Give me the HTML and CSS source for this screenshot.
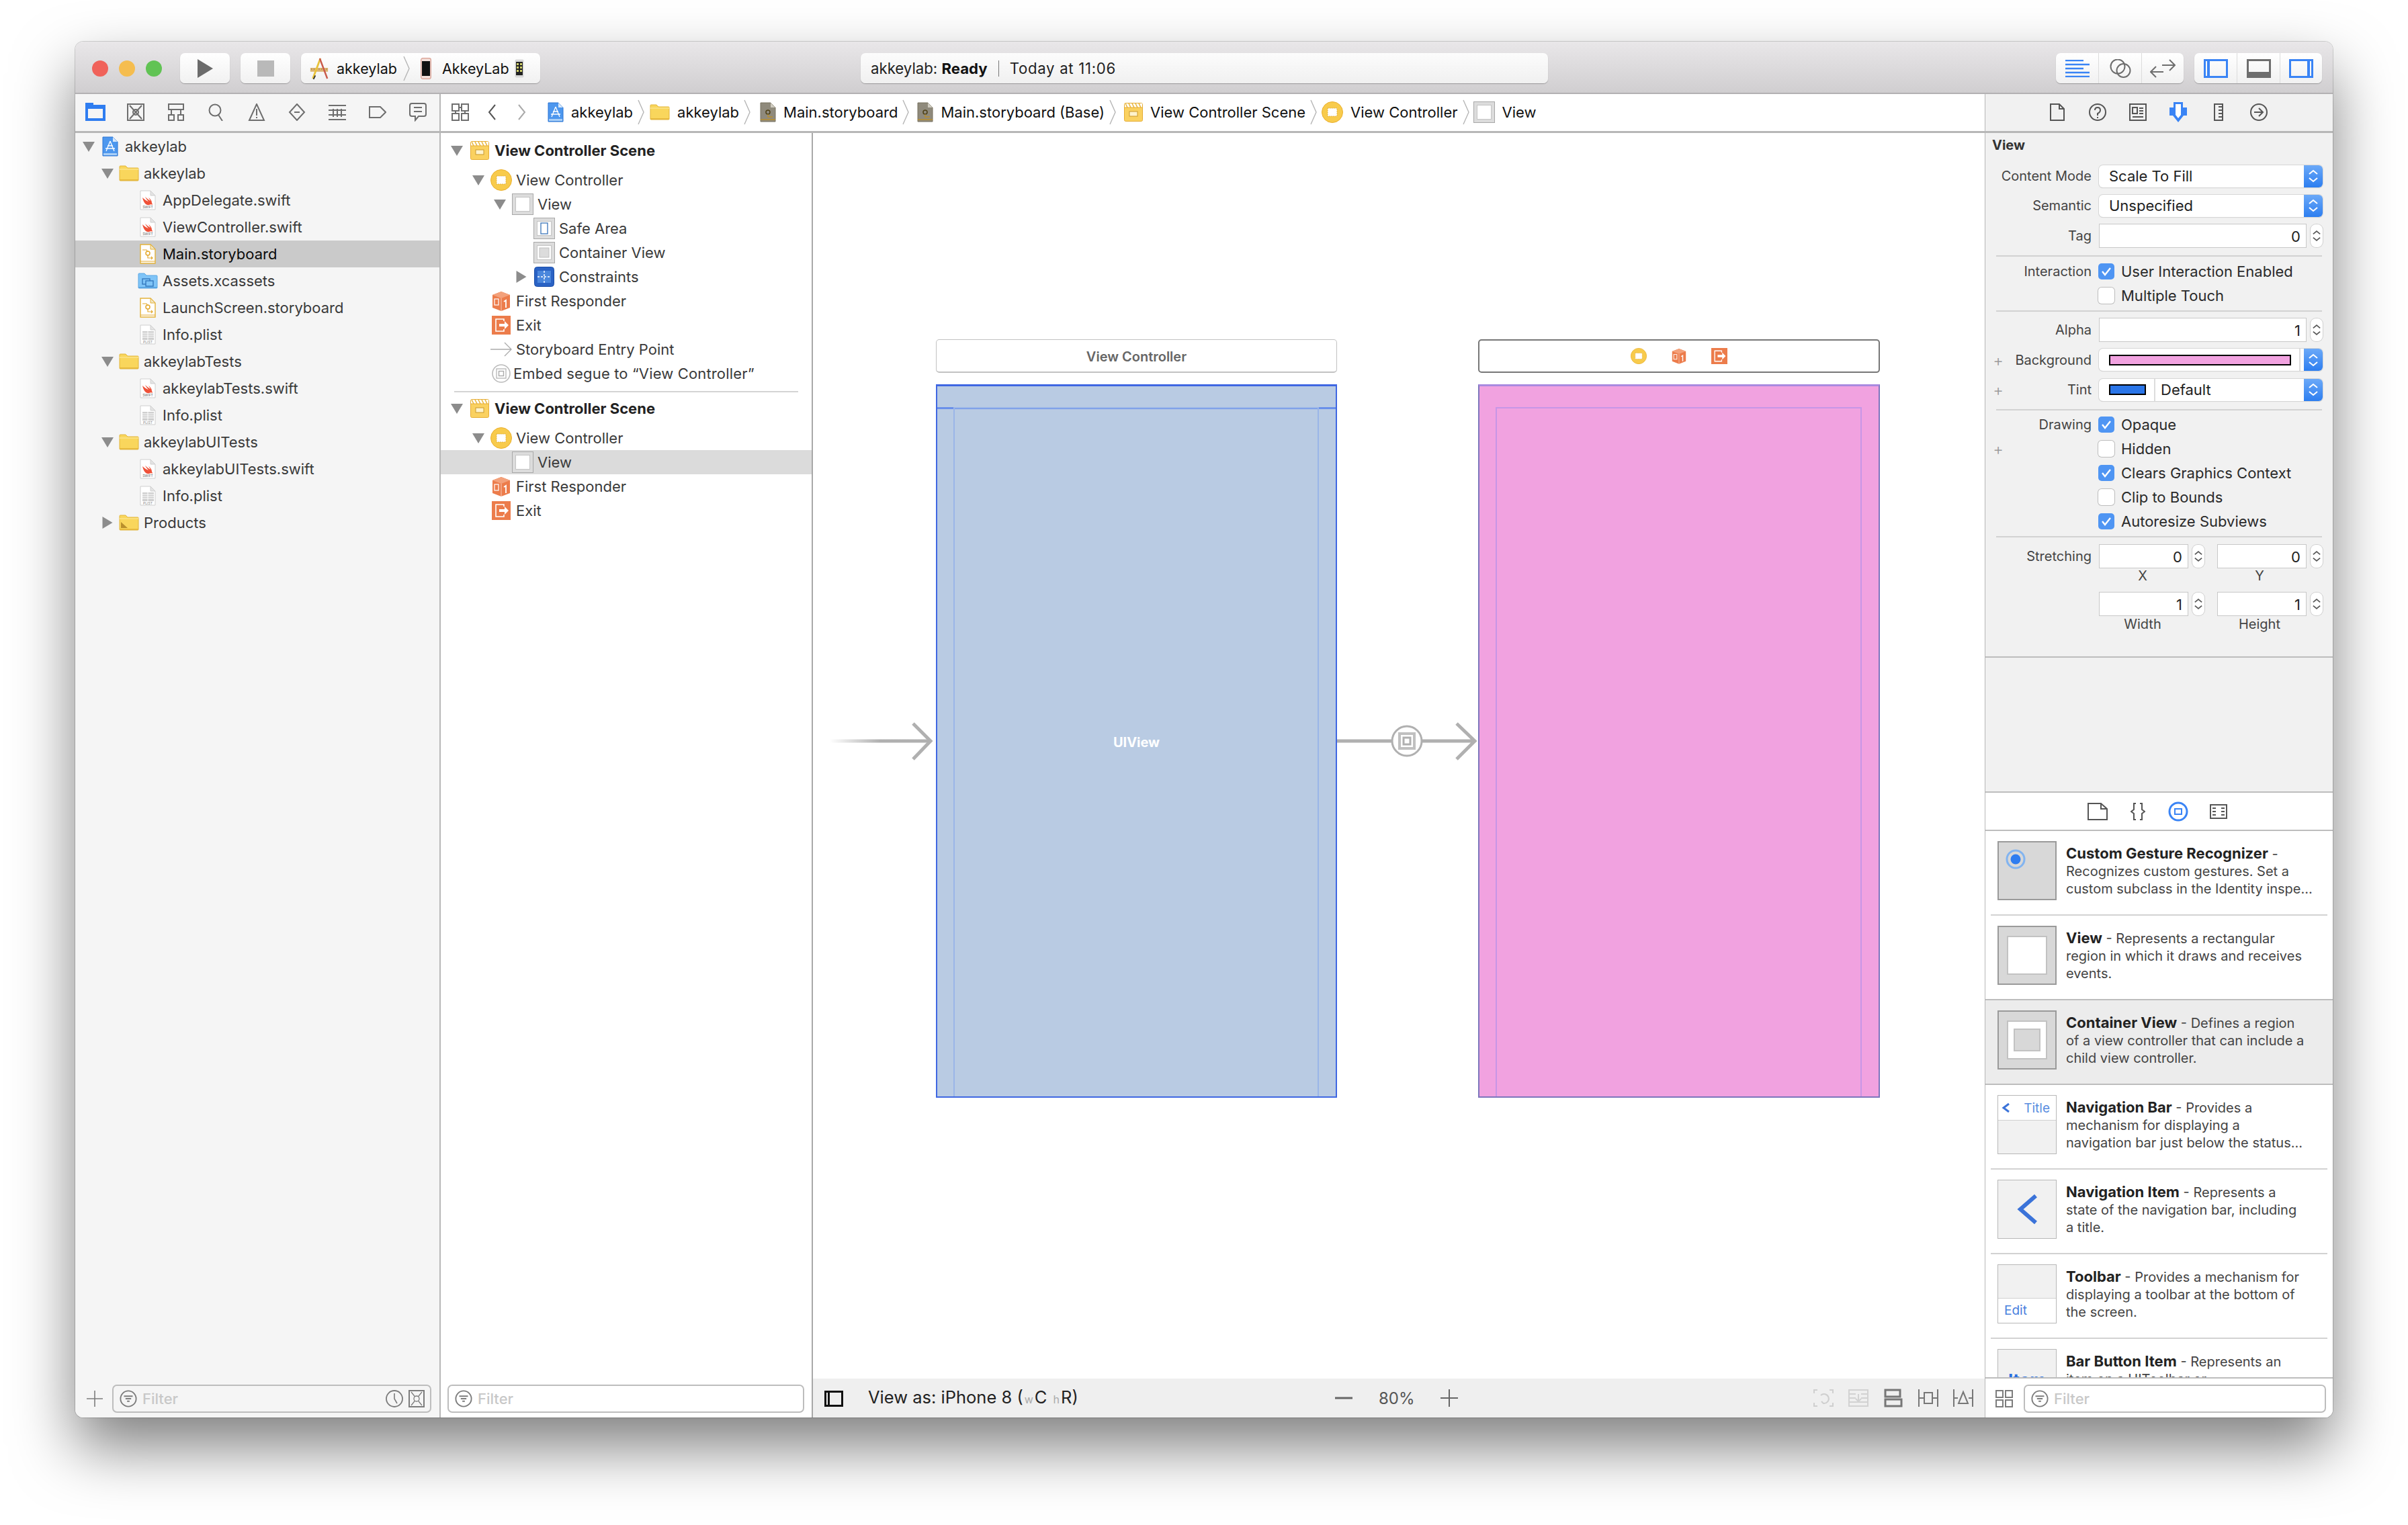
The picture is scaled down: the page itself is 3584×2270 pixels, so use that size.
FILE: index.html
```html
<!DOCTYPE html>
<html lang="en">
<head>
<meta charset="utf-8">
<title>Xcode - akkeylab</title>
<link rel="stylesheet" href="styles.css">
</head>
<body>
<svg class="defs" width="0" height="0" aria-hidden="true">
  <defs>
    <linearGradient id="fadeline" x1="0" x2="1" y1="0" y2="0"><stop offset="0" stop-color="#b0b0b0" stop-opacity="0"/><stop offset=".5" stop-color="#b0b0b0"/></linearGradient>
    <symbol id="tdown" viewBox="0 0 18 15"><path d="M0 0h18L9 15z" fill="#8c8c8c"/></symbol>
    <symbol id="tright" viewBox="0 0 15 18"><path d="M0 0l15 9L0 18z" fill="#8c8c8c"/></symbol>
    <symbol id="project" viewBox="0 0 24 30"><path d="M1 1h15l7 7v21H1z" fill="#4d97ee" stroke="#2d74d2"/><path d="M16 1v7h7z" fill="#d6e8fb"/><path d="M2 25h20v3H2z" fill="#a9cff7"/><path d="M12 7l-6 15M12 7l6 15M5 18h14M8 14h8" stroke="#fff" stroke-width="1.3" fill="none"/></symbol>
    <symbol id="folder" viewBox="0 0 30 24"><path d="M1 22V2q0-1 1-1h8l3 3h15q1 0 1 1v17q0 1-1 1H2q-1 0-1-1z" fill="#f9d65c" stroke="#e2b53a"/><path d="M1 5h28v2H1z" fill="#fbe07e"/><path d="M1 21h28v2H1z" fill="#e6b93e"/></symbol>
    <symbol id="products" viewBox="0 0 30 24"><use href="#folder"/><path d="M3 20V11l10 9z" fill="#b98f2c"/></symbol>
    <symbol id="assets" viewBox="0 0 30 24"><path d="M1 22V2q0-1 1-1h8l3 3h15q1 0 1 1v17q0 1-1 1H2q-1 0-1-1z" fill="#7fc4f7" stroke="#5aa6e3"/><path d="M1 21h28v2H1z" fill="#5aa6e3"/><rect x="7" y="9" width="11" height="8" fill="none" stroke="#2f73ba" stroke-width="1.3"/><rect x="12" y="12" width="11" height="8" fill="#7fc4f7" stroke="#2f73ba" stroke-width="1.3"/></symbol>
    <symbol id="swift" viewBox="0 0 24 30"><path d="M1 1h15l7 7v21H1z" fill="#fff" stroke="#cfcfcf"/><path d="M16 1v7h7z" fill="#e4e4e4" stroke="#cfcfcf"/><path d="M4 11c3 3 6 5 9 6-2-2-4-5-5-7 3 3 6 5 8 6-1-2-2-3-3-5 3 2 5 5 5 8 1 2 1 3 1 3-1-1-3-1-5 0-4 1-8-2-10-11z" fill="#ef5138"/><text x="12" y="27" font-size="5" text-anchor="middle" fill="#666" font-family="Inter, sans-serif">SWIFT</text></symbol>
    <symbol id="storyfile" viewBox="0 0 24 30"><path d="M1 1h15l7 7v21H1z" fill="#fff" stroke="#e3b23a" stroke-width="1.4"/><path d="M16 1v7h7z" fill="#f2e6c4" stroke="#e3b23a"/><circle cx="12" cy="14" r="3" fill="none" stroke="#e3a92e" stroke-width="1.5"/><path d="M4 9h6l2 3M12 17v4h7m-2-2l2 2-2 2M1 26h22" fill="none" stroke="#e3a92e" stroke-width="1.2"/></symbol>
    <symbol id="plist" viewBox="0 0 24 30"><path d="M1 1h15l7 7v21H1z" fill="#fff" stroke="#cfcfcf"/><path d="M16 1v7h7z" fill="#e4e4e4" stroke="#cfcfcf"/><path d="M4 10h17v13H4z" fill="#cfcfcf"/><path d="M4 13h17M4 16h17M4 19h17M12 10v13" stroke="#fff"/><text x="12" y="28" font-size="5" text-anchor="middle" fill="#888" font-family="Inter, sans-serif">PLIST</text></symbol>
    <symbol id="storygray" viewBox="0 0 24 30"><path d="M1 1h15l7 7v21H1z" fill="#8f8a7c" stroke="#77705f"/><path d="M16 1v7h7z" fill="#cfcbc0"/><circle cx="12" cy="15" r="3" fill="none" stroke="#4d3f14" stroke-width="1.5"/><path d="M12 18v4h7M1 26h22" fill="none" stroke="#b98f2c" stroke-width="1.3"/></symbol>
    <symbol id="scene" viewBox="0 0 28 28"><rect x=".5" y=".5" width="27" height="27" rx="2" fill="#fad160" stroke="#e6ad35"/><path d="M1 1h26v6H1z" fill="#fff"/><path d="M2 1l3 6M7 1l3 6M12 1l3 6M17 1l3 6M22 1l3 6" stroke="#e9b73f" stroke-width="1.6"/><path d="M1 7h26" stroke="#e6ad35"/><rect x="8" y="13" width="12" height="7" fill="#fff3cc" stroke="#c99a2c"/></symbol>
    <symbol id="vc" viewBox="0 0 32 32"><circle cx="16" cy="16" r="15.5" fill="#f8cb4c" stroke="#eab02f"/><rect x="9" y="10" width="14" height="12" fill="#fff"/><rect x="9" y="10" width="14" height="12" fill="none" stroke="#d9a431" stroke-dasharray="1.5 1.5"/></symbol>
    <symbol id="view" viewBox="0 0 32 32"><rect x=".5" y=".5" width="31" height="31" fill="#dcdcdc" stroke="#a8a8a8"/><rect x="5.500" y="5.500" width="21" height="21" fill="#fff" stroke="#c4c4c4"/></symbol>
    <symbol id="safe" viewBox="0 0 32 32"><use href="#view"/><rect x="11" y="8" width="10" height="16" fill="#fff" stroke="#3a74b8" stroke-width="1.3"/></symbol>
    <symbol id="container" viewBox="0 0 32 32"><use href="#view"/><rect x="9" y="9" width="14" height="14" fill="#dcdcdc" stroke="#c0c0c0"/></symbol>
    <symbol id="constraints" viewBox="0 0 30 30"><rect x=".5" y=".5" width="29" height="29" rx="4" fill="#2a62c4" stroke="#1c4fa8"/><rect x="5" y="6" width="20" height="18" fill="#4a86dc"/><path d="M15 6v18M5 15h20" stroke="#fff" stroke-width="1.4" stroke-dasharray="3 2"/></symbol>
    <symbol id="cube" viewBox="0 0 28 30"><path d="M14 1l13 5v19l-13 5L1 25V6z" fill="#ec7c4b"/><path d="M14 1l13 5-13 5L1 6z" fill="#f3a17b"/><path d="M14 11v19" stroke="#fff" stroke-opacity=".6"/><rect x="4" y="12" width="6" height="9" fill="none" stroke="#fff" stroke-width="1.2"/><path d="M18 16l3-2v11" fill="none" stroke="#fff" stroke-width="1.8"/></symbol>
    <symbol id="exit" viewBox="0 0 28 28"><rect width="28" height="28" fill="#ec7c4b"/><path d="M18 8V5H6v18h12v-3" fill="none" stroke="#fff" stroke-width="1.600"/><path d="M11 12h8V8l6 6-6 6v-4h-8z" fill="#fff"/></symbol>
    <symbol id="entry" viewBox="0 0 32 22"><path d="M0 11h31M21 1l10 10-10 10" fill="none" stroke="#aaa" stroke-width="1.3"/></symbol>
    <symbol id="embed" viewBox="0 0 28 28"><circle cx="14" cy="14" r="13" fill="#fff" stroke="#bbb" stroke-width="1.6"/><rect x="7" y="7" width="14" height="14" fill="none" stroke="#bbb" stroke-width="1.4"/><rect x="10.500" y="10.500" width="7" height="7" fill="none" stroke="#aaa" stroke-width="1.4"/></symbol>
    <symbol id="filter" viewBox="0 0 28 28"><circle cx="14" cy="14" r="12.500" fill="none" stroke="#7c7c7c" stroke-width="2"/><path d="M7 10h14M9.500 14h9M12 18h4" stroke="#7c7c7c" stroke-width="2"/></symbol>
    <symbol id="chev" viewBox="2 2 14 20"><path d="M3 9l6-5 6 5M3 15l6 5 6-5" fill="none" stroke="currentColor" stroke-width="2"/></symbol>
    <symbol id="sepchev" viewBox="0 0 10 38"><path d="M1 1l8 18L1 37" fill="none" stroke="#b5b5b5" stroke-width="1.4"/></symbol>
    <symbol id="check" viewBox="0 0 24 24"><path d="M6 12l4 5 8-10" fill="none" stroke="#fff" stroke-width="2.400"/></symbol>
    <symbol id="xcode" viewBox="0 0 32 34"><path d="M2 16h28v6H2z" fill="#dcb472"/><path d="M4 17v2M8 17v2M12 17v2M16 17v2M20 17v2M24 17v2M28 17v2" stroke="#9b7a42"/><path d="M18 1L6 33" stroke="#e8c23a" stroke-width="3"/><path d="M17 1l12 32" stroke="#c95a4a" stroke-width="2.500"/><path d="M10 28l-3 6" stroke="#333" stroke-width="2"/></symbol>
    <symbol id="iphone" viewBox="0 0 16 32"><rect x=".7" y=".7" width="14.600" height="30.600" rx="2.500" fill="#f3e0da" stroke="#d89c8f" stroke-width="1.2"/><rect x="2" y="5" width="12" height="22" fill="#111"/></symbol>
    <symbol id="iphonecolor" viewBox="0 0 14 28"><rect x=".5" y=".5" width="13" height="27" rx="2" fill="#d8d8d8"/><rect x="2" y="4" width="10" height="20" fill="#222"/><path d="M3 6h3v3H3zM8 6h3v3H8zM3 11h3v3H3zM8 11h3v3H8zM3 16h3v3H3zM8 16h3v3H8z" fill="#cfcf6a"/></symbol>
  </defs>
</svg>

<div class="window">
  <header class="titlebar">
    <div class="lights"><span class="light red"></span><span class="light yellow"></span><span class="light green"></span></div>
    <button class="tbtn first"><svg width="23" height="28" viewBox="0 0 23 28"><path d="M0 0l23 14L0 28z" fill="#6b6b6b"/></svg></button>
    <button class="tbtn"><span class="stopsq"></span></button>
    <div class="tbtn scheme">
      <svg class="scheme-app" width="30" height="34"><use href="#xcode"/></svg><span>akkeylab</span>
      <svg class="scheme-sep" width="10" height="38"><use href="#sepchev"/></svg>
      <svg class="scheme-phone" width="16" height="32"><use href="#iphone"/></svg><span>AkkeyLab</span>
      <svg class="scheme-phone2" width="14" height="28"><use href="#iphonecolor"/></svg>
    </div>
    <div class="status"><span>akkeylab: <b>Ready</b></span><i class="status-sep"></i><span class="status-time">Today at 11:06</span></div>
    <div class="segs">
      <div class="seg"><div class="segcell"><svg width="36" height="26" viewBox="0 0 36 26"><path d="M0 1h27M0 7h36M0 13h27M0 19h36M0 25h36" stroke="#3a84f5" stroke-width="2.400"/></svg></div>
        <div class="segcell"><svg width="32" height="28" viewBox="0 0 32 28"><circle cx="12" cy="11" r="10.500" fill="none" stroke="#6e6e6e" stroke-width="2"/><circle cx="20.500" cy="17" r="10" fill="none" stroke="#6e6e6e" stroke-width="2"/></svg></div>
        <div class="segcell last"><svg width="38" height="28" viewBox="0 0 38 28"><path d="M18 9h19M29 1l8 8-8 8M20 19H1M9 11l-8 8 8 8" fill="none" stroke="#6e6e6e" stroke-width="2"/></svg></div></div>
      <div class="seg"><div class="segcell"><svg width="36" height="28" viewBox="0 0 36 28"><rect x="1.500" y="1.500" width="33" height="25" fill="none" stroke="#3a84f5" stroke-width="3"/><rect x="5" y="3" width="4" height="22" fill="#3a84f5"/></svg></div>
        <div class="segcell"><svg width="36" height="28" viewBox="0 0 36 28"><rect x="1.500" y="1.500" width="33" height="25" fill="none" stroke="#6e6e6e" stroke-width="3"/><rect x="3" y="19" width="30" height="6" fill="#6e6e6e"/></svg></div>
        <div class="segcell last"><svg width="36" height="28" viewBox="0 0 36 28"><rect x="1.500" y="1.500" width="33" height="25" fill="none" stroke="#3a84f5" stroke-width="3"/><rect x="27" y="3" width="4" height="22" fill="#3a84f5"/></svg></div></div>
    </div>
  </header>

  <div class="workspace">
    <div class="navtools">
      <svg width="30" height="27" viewBox="0 0 30 27"><path fill="#2f7df0" fill-rule="evenodd" d="M0 0h12v3h18v24H0zM4 9v14h22V9z"/></svg>
      <svg width="26" height="26" viewBox="0 0 26 26" class="ticon"><rect x="1" y="1" width="24" height="24"/><path d="M4 3l18 20M22 3L4 23"/><circle cx="13" cy="13" r="4" fill="#fff"/></svg>
      <svg width="26" height="26" viewBox="0 0 26 26" class="ticon"><rect x="2" y="1" width="22" height="8"/><rect x="2" y="17" width="8" height="8"/><rect x="16" y="17" width="8" height="8"/><path d="M6 9v8M20 9v8"/></svg>
      <svg width="26" height="26" viewBox="0 0 26 26" class="ticon"><circle cx="11" cy="10" r="8.500"/><path d="M16 17l6 9"/></svg>
      <svg width="26" height="26" viewBox="0 0 26 26" class="ticon"><path d="M13 1L2 25h22zM13 8v10M13 20v2"/></svg>
      <svg width="26" height="26" viewBox="0 0 26 26" class="ticon"><path d="M13 1l11 12-11 12L2 13zM9 13h8"/></svg>
      <svg width="26" height="26" viewBox="0 0 26 26" class="ticon"><path d="M0 3h26M0 10h26M0 17h26M0 24h26M7 8v12M13 8v12M19 8v12"/></svg>
      <svg width="26" height="18" viewBox="0 0 26 18" class="ticon"><path d="M1 1h16l8 8-8 8H1z"/></svg>
      <svg width="26" height="28" viewBox="0 0 26 28" class="ticon"><path d="M4 1h18q3 0 3 3v13q0 3-3 3h-8l-5 6v-6H4q-3 0-3-3V4q0-3 3-3zM7 7h12M7 13h12"/></svg>
    </div>

    <div class="crumbs">
      <svg class="rel" width="26" height="26" viewBox="0 0 26 26"><g class="ticon"><rect x="1" y="1" width="10" height="10"/><rect x="15" y="1" width="10" height="10"/><rect x="1" y="15" width="10" height="10"/><rect x="15" y="15" width="10" height="10"/><path d="M11 6h4M6 11v4M20 11v4"/></g></svg>
      <svg class="back" width="12" height="24" viewBox="0 0 12 24"><path d="M11 1L2 12l9 11" fill="none" stroke="#555" stroke-width="2"/></svg>
      <svg class="fwd" width="12" height="24" viewBox="0 0 12 24"><path d="M1 1l9 11L1 23" fill="none" stroke="#aaa" stroke-width="2"/></svg>
      <span class="crumb c-first"><svg width="24" height="30"><use href="#project"/></svg>akkeylab</span>
      <svg class="csep s8" width="10" height="38"><use href="#sepchev"/></svg>
      <span class="crumb"><svg width="30" height="28"><use href="#folder"/></svg>akkeylab</span>
      <svg class="csep s14" width="10" height="38"><use href="#sepchev"/></svg>
      <span class="crumb"><svg width="24" height="30"><use href="#storygray"/></svg>Main.storyboard</span>
      <svg class="csep s12" width="10" height="38"><use href="#sepchev"/></svg>
      <span class="crumb"><svg width="24" height="30"><use href="#storygray"/></svg>Main.storyboard (Base)</span>
      <svg class="csep s12" width="10" height="38"><use href="#sepchev"/></svg>
      <span class="crumb"><svg width="28" height="28"><use href="#scene"/></svg>View Controller Scene</span>
      <svg class="csep s7" width="10" height="38"><use href="#sepchev"/></svg>
      <span class="crumb"><svg width="32" height="32"><use href="#vc"/></svg>View Controller</span>
      <svg class="csep s6" width="10" height="38"><use href="#sepchev"/></svg>
      <span class="crumb"><svg width="32" height="32"><use href="#view"/></svg>View</span>
    </div>

    <div class="insptools">
      <svg width="22" height="26" viewBox="0 0 22 26" class="ticon dark"><path d="M1 1h13l7 7v17H1zM14 1v7h7"/></svg>
      <svg width="26" height="26" viewBox="0 0 26 26" class="ticon dark"><circle cx="13" cy="13" r="12"/><path d="M9 10q0-4 4-4t4 4q0 3-4 5v3M13 20v2"/></svg>
      <svg width="26" height="26" viewBox="0 0 26 26" class="ticon dark"><rect x="1" y="1" width="24" height="24"/><rect x="5" y="6" width="7" height="9"/><path d="M15 7h6M15 11h6M15 15h6M5 20h16"/></svg>
      <svg width="30" height="30" viewBox="0 0 30 30"><path d="M8 0h14v8h6v12h-5l-8 10-8-10H2V8h6z" fill="#3a84f5"/><path d="M11 3h8v16l-4 5-4-5z" fill="#fff"/></svg>
      <svg width="14" height="26" viewBox="0 0 14 26" class="ticon dark"><rect x="1" y="1" width="12" height="24"/><path d="M7 5h6M7 10h6M7 15h6M7 20h6"/></svg>
      <svg width="26" height="26" viewBox="0 0 26 26" class="ticon dark"><circle cx="13" cy="13" r="12"/><path d="M6 13h13M13 7l6 6-6 6"/></svg>
    </div>

    <aside class="navigator">
      <div class="list">
        <div class="row d0"><svg class="tri" width="18" height="15"><use href="#tdown"/></svg><span class="ic"><svg width="24" height="30"><use href="#project"/></svg></span><span>akkeylab</span></div>
        <div class="row d1"><svg class="tri" width="18" height="15"><use href="#tdown"/></svg><span class="ic"><svg width="30" height="24"><use href="#folder"/></svg></span><span>akkeylab</span></div>
        <div class="row d2"><span class="tri"></span><span class="ic"><svg width="24" height="30"><use href="#swift"/></svg></span><span>AppDelegate.swift</span></div>
        <div class="row d2"><span class="tri"></span><span class="ic"><svg width="24" height="30"><use href="#swift"/></svg></span><span>ViewController.swift</span></div>
        <div class="row d2 picked"><span class="tri"></span><span class="ic"><svg width="24" height="30"><use href="#storyfile"/></svg></span><span>Main.storyboard</span></div>
        <div class="row d2"><span class="tri"></span><span class="ic"><svg width="30" height="24"><use href="#assets"/></svg></span><span>Assets.xcassets</span></div>
        <div class="row d2"><span class="tri"></span><span class="ic"><svg width="24" height="30"><use href="#storyfile"/></svg></span><span>LaunchScreen.storyboard</span></div>
        <div class="row d2"><span class="tri"></span><span class="ic"><svg width="24" height="30"><use href="#plist"/></svg></span><span>Info.plist</span></div>
        <div class="row d1"><svg class="tri" width="18" height="15"><use href="#tdown"/></svg><span class="ic"><svg width="30" height="24"><use href="#folder"/></svg></span><span>akkeylabTests</span></div>
        <div class="row d2"><span class="tri"></span><span class="ic"><svg width="24" height="30"><use href="#swift"/></svg></span><span>akkeylabTests.swift</span></div>
        <div class="row d2"><span class="tri"></span><span class="ic"><svg width="24" height="30"><use href="#plist"/></svg></span><span>Info.plist</span></div>
        <div class="row d1"><svg class="tri" width="18" height="15"><use href="#tdown"/></svg><span class="ic"><svg width="30" height="24"><use href="#folder"/></svg></span><span>akkeylabUITests</span></div>
        <div class="row d2"><span class="tri"></span><span class="ic"><svg width="24" height="30"><use href="#swift"/></svg></span><span>akkeylabUITests.swift</span></div>
        <div class="row d2"><span class="tri"></span><span class="ic"><svg width="24" height="30"><use href="#plist"/></svg></span><span>Info.plist</span></div>
        <div class="row d1"><svg class="tri" width="15" height="18"><use href="#tright"/></svg><span class="ic"><svg width="30" height="24"><use href="#products"/></svg></span><span>Products</span></div>
      </div>
      <div class="bottom">
        <svg class="plus" width="24" height="24" viewBox="0 0 24 24"><path d="M0 12h24M12 0v24" stroke="#7c7c7c" stroke-width="1.600"/></svg>
        <div class="field nav-field">
          <svg width="26" height="26"><use href="#filter"/></svg><span class="ph">Filter</span>
          <svg class="clock" width="26" height="26" viewBox="0 0 26 26"><circle cx="13" cy="13" r="12" fill="none" stroke="#7c7c7c" stroke-width="1.800"/><path d="M13 5v8l4 7" fill="none" stroke="#7c7c7c" stroke-width="1.600"/></svg>
          <svg width="24" height="26" viewBox="0 0 24 26"><rect x="1" y="1" width="22" height="24" fill="none" stroke="#7c7c7c" stroke-width="2"/><path d="M4 3l16 20M20 3L4 23" stroke="#7c7c7c" stroke-width="1.300"/><circle cx="12" cy="13" r="4" fill="#f5f5f5" stroke="#7c7c7c" stroke-width="1.300"/></svg>
        </div>
      </div>
    </aside>

    <section class="outline">
      <div class="list">
        <div class="orow o0 scene-row"><svg class="tri" width="18" height="15"><use href="#tdown"/></svg><span class="ic"><svg width="28" height="28"><use href="#scene"/></svg></span><b>View Controller Scene</b></div>
        <div class="orow o1"><svg class="tri" width="18" height="15"><use href="#tdown"/></svg><span class="ic"><svg width="32" height="32"><use href="#vc"/></svg></span><span>View Controller</span></div>
        <div class="orow o2"><svg class="tri" width="18" height="15"><use href="#tdown"/></svg><span class="ic"><svg width="32" height="32"><use href="#view"/></svg></span><span>View</span></div>
        <div class="orow o3"><span class="tri"></span><span class="ic"><svg width="32" height="32"><use href="#safe"/></svg></span><span>Safe Area</span></div>
        <div class="orow o3"><span class="tri"></span><span class="ic"><svg width="32" height="32"><use href="#container"/></svg></span><span>Container View</span></div>
        <div class="orow o3"><svg class="tri" width="15" height="18"><use href="#tright"/></svg><span class="ic"><svg width="30" height="30"><use href="#constraints"/></svg></span><span>Constraints</span></div>
        <div class="orow o1"><span class="tri"></span><span class="ic"><svg width="28" height="30"><use href="#cube"/></svg></span><span>First Responder</span></div>
        <div class="orow o1"><span class="tri"></span><span class="ic"><svg width="28" height="28"><use href="#exit"/></svg></span><span>Exit</span></div>
        <div class="orow o1"><span class="tri"></span><span class="ic"><svg width="32" height="22"><use href="#entry"/></svg></span><span>Storyboard Entry Point</span></div>
        <div class="orow o1"><span class="tri"></span><span class="ic"><svg width="28" height="28"><use href="#embed"/></svg></span><span class="tight">Embed segue to “View Controller”</span></div>
        <div class="osep"></div>
        <div class="orow o0 scene-row"><svg class="tri" width="18" height="15"><use href="#tdown"/></svg><span class="ic"><svg width="28" height="28"><use href="#scene"/></svg></span><b>View Controller Scene</b></div>
        <div class="orow o1"><svg class="tri" width="18" height="15"><use href="#tdown"/></svg><span class="ic"><svg width="32" height="32"><use href="#vc"/></svg></span><span>View Controller</span></div>
        <div class="orow o2 picked-light"><span class="tri"></span><span class="ic"><svg width="32" height="32"><use href="#view"/></svg></span><span>View</span></div>
        <div class="orow o1"><span class="tri"></span><span class="ic"><svg width="28" height="30"><use href="#cube"/></svg></span><span>First Responder</span></div>
        <div class="orow o1"><span class="tri"></span><span class="ic"><svg width="28" height="28"><use href="#exit"/></svg></span><span>Exit</span></div>
      </div>
      <div class="bottom white">
        <div class="field out-field"><svg width="26" height="26"><use href="#filter"/></svg><span class="ph">Filter</span></div>
      </div>
    </section>

    <main class="canvas">
      <div class="stage">
        <div class="vclabel a">View Controller</div>
        <div class="vclabel b">
          <svg width="24" height="26"><use href="#vc"/></svg>
          <svg width="22" height="26"><use href="#cube"/></svg>
          <svg width="24" height="26"><use href="#exit"/></svg>
        </div>
        <div class="vc-scene blue"><div class="band"></div><div class="safe"></div><span class="uiview">UIView</span></div>
        <div class="vc-scene pink"><div class="safe"></div></div>
        <svg class="links" width="1000" height="100" viewBox="0 855 1000 100">
          <rect x="25" y="902.500" width="150" height="5" fill="url(#fadeline)"/>
          <path d="M149 879l26 26-26 27M780 905h82M906 905h77M958 879l27 26-27 27" fill="none" stroke="#b0b0b0" stroke-width="5"/>
          <circle cx="884" cy="905" r="22" fill="#fff" stroke="#b0b0b0" stroke-width="3"/>
          <rect x="873" y="894" width="22" height="22" fill="none" stroke="#c0c0c0" stroke-width="4"/>
          <rect x="879" y="900" width="10" height="10" fill="none" stroke="#b0b0b0" stroke-width="3"/>
        </svg>
      </div>
      <div class="canvasbar">
        <svg class="outline-toggle" width="28" height="24" viewBox="0 0 28 24"><rect x="1.500" y="1.500" width="25" height="21" fill="none" stroke="#111" stroke-width="3"/><rect x="5" y="3" width="3" height="18" fill="#111"/></svg>
        <span class="viewas">View as: iPhone 8 (<small>w</small>C <small>h</small>R)</span>
        <div class="zoomctl">
          <svg width="26" height="4" viewBox="0 0 26 4"><path d="M0 2h26" stroke="#666" stroke-width="3"/></svg>
          <span>80%</span>
          <svg width="26" height="26" viewBox="0 0 26 26"><path d="M0 13h26M13 0v26" stroke="#666" stroke-width="2"/></svg>
        </div>
        <div class="cbicons">
          <svg width="30" height="26" viewBox="0 0 30 26"><path d="M1 6V1h5M24 1h5v5M1 20v5h5M24 25h5v-5M11 9a7 7 0 1 1 4 12l-3-3" fill="none" stroke="#cfcfcf" stroke-width="2"/></svg>
          <svg width="30" height="26" viewBox="0 0 30 26"><path d="M1 1h28v24H1zM1 7h10M19 7h10M1 13h10M19 13h10M1 19h28M15 7v11m-4-4l4 4 4-4" fill="none" stroke="#d2d2d2" stroke-width="2"/></svg>
          <svg width="30" height="28" viewBox="0 0 30 28"><path d="M3 2h22v10H3zM3 16h24v10H3z" fill="none" stroke="#777" stroke-width="3"/></svg>
          <svg width="30" height="26" viewBox="0 0 30 26"><path d="M1 0v26M29 0v26M1 13h7M22 13h7M9 5h12v16H9z" fill="none" stroke="#777" stroke-width="2"/></svg>
          <svg width="30" height="26" viewBox="0 0 30 26"><path d="M1 0v26M29 0v26M1 13h6M23 13h6M15 4l7 17H8z" fill="none" stroke="#777" stroke-width="2"/></svg>
        </div>
      </div>
    </main>

    <aside class="inspector">
      <div class="attrs">
        <div class="insp-title">View</div>
        <div class="irow r44"><label class="ilabel">Content Mode</label><div class="popup"><span>Scale To Fill</span><i class="popup-arrow"><svg width="14" height="20"><use href="#chev"/></svg></i></div></div>
        <div class="irow r44"><label class="ilabel">Semantic</label><div class="popup"><span>Unspecified</span><i class="popup-arrow"><svg width="14" height="20"><use href="#chev"/></svg></i></div></div>
        <div class="irow r45"><label class="ilabel">Tag</label><div class="numfield full">0</div><span class="stepper"><svg width="12" height="22"><use href="#chev"/></svg></span></div>
        <hr class="idiv d7">
        <div class="irow r36"><label class="ilabel">Interaction</label><span class="cb on"><svg width="24" height="24"><use href="#check"/></svg></span><span class="cbtext">User Interaction Enabled</span></div>
        <div class="irow r36"><label class="ilabel"></label><span class="cb"></span><span class="cbtext">Multiple Touch</span></div>
        <hr class="idiv d4">
        <div class="irow r44"><label class="ilabel">Alpha</label><div class="numfield full">1</div><span class="stepper"><svg width="12" height="22"><use href="#chev"/></svg></span></div>
        <div class="irow r45"><span class="iplus">+</span><label class="ilabel">Background</label><div class="popup swatchpop"><span class="swatch pinkswatch"></span><i class="popup-cut"></i><i class="popup-arrow"><svg width="14" height="20"><use href="#chev"/></svg></i></div></div>
        <div class="irow r44"><span class="iplus">+</span><label class="ilabel">Tint</label><div class="popup swatchpop"><span class="swatch tintswatch"></span><i class="popup-cut near"></i><span class="tint-name">Default</span><i class="popup-arrow"><svg width="14" height="20"><use href="#chev"/></svg></i></div></div>
        <hr class="idiv d7b">
        <div class="irow r36"><label class="ilabel">Drawing</label><span class="cb on"><svg width="24" height="24"><use href="#check"/></svg></span><span class="cbtext">Opaque</span></div>
        <div class="irow r36"><span class="iplus">+</span><label class="ilabel"></label><span class="cb"></span><span class="cbtext">Hidden</span></div>
        <div class="irow r36"><label class="ilabel"></label><span class="cb on"><svg width="24" height="24"><use href="#check"/></svg></span><span class="cbtext">Clears Graphics Context</span></div>
        <div class="irow r36"><label class="ilabel"></label><span class="cb"></span><span class="cbtext">Clip to Bounds</span></div>
        <div class="irow r36"><label class="ilabel"></label><span class="cb on"><svg width="24" height="24"><use href="#check"/></svg></span><span class="cbtext">Autoresize Subviews</span></div>
        <hr class="idiv d4c">
        <div class="irow r44"><label class="ilabel">Stretching</label><div class="numfield half">0</div><span class="stepper"><svg width="12" height="22"><use href="#chev"/></svg></span><div class="numfield half second">0</div><span class="stepper"><svg width="12" height="22"><use href="#chev"/></svg></span></div>
        <div class="subrow xy"><span>X</span><span>Y</span></div>
        <div class="irow r44 gap13"><label class="ilabel"></label><div class="numfield half">1</div><span class="stepper"><svg width="12" height="22"><use href="#chev"/></svg></span><div class="numfield half second">1</div><span class="stepper"><svg width="12" height="22"><use href="#chev"/></svg></span></div>
        <div class="subrow"><span>Width</span><span>Height</span></div>
      </div>
      <div class="lib-gap"></div>
      <div class="libtabs">
        <svg width="30" height="26" viewBox="0 0 30 26" class="ticon dark"><path d="M1 1h19l9 8v16H1zM20 1v8h9"/></svg>
        <svg width="22" height="26" viewBox="0 0 22 26" class="ticon dark"><path d="M8 1H5v9l-4 3 4 3v9h3M14 1h3v9l4 3-4 3v9h-3"/></svg>
        <svg width="30" height="30" viewBox="0 0 30 30"><circle cx="15" cy="15" r="13" fill="none" stroke="#3a84f5" stroke-width="3"/><rect x="10" y="11" width="10" height="8" fill="none" stroke="#3a84f5" stroke-width="2"/></svg>
        <svg width="26" height="22" viewBox="0 0 26 22" class="ticon dark"><rect x="1" y="1" width="24" height="20"/><path d="M4 6h5M4 11h5M4 16h5M17 6h5M17 11h5M17 16h5"/></svg>
      </div>
      <div class="library">
        <article class="item"><div class="thumb gray"><svg class="radio" width="30" height="30" viewBox="0 0 30 30"><circle cx="15" cy="15" r="13" fill="none" stroke="#82b4f0" stroke-width="3"/><circle cx="15" cy="15" r="7.500" fill="#2f7df0"/></svg></div><p><b>Custom Gesture Recognizer</b> -<br>Recognizes custom gestures. Set a<br>custom subclass in the Identity inspe...</p></article>
        <article class="item"><div class="thumb gray"><span class="thumb-view"></span></div><p><b>View</b> - Represents a rectangular<br>region in which it draws and receives<br>events.</p></article>
        <article class="item chosen"><div class="thumb gray"><span class="thumb-view"><span class="thumb-inner"></span></span></div><p><b>Container View</b> - Defines a region<br>of a view controller that can include a<br>child view controller.</p></article>
        <article class="item"><div class="thumb pale"><div class="nb"><svg width="12" height="16" viewBox="0 0 12 16"><path d="M11 2L3 8l8 6" fill="none" stroke="#3b73d9" stroke-width="3"/></svg><span>Title</span></div></div><p><b>Navigation Bar</b> - Provides a<br>mechanism for displaying a<br>navigation bar just below the status...</p></article>
        <article class="item"><div class="thumb pale center"><svg width="32" height="46" viewBox="0 0 32 46"><path d="M29 3L6 23l23 20" fill="none" stroke="#3b73d9" stroke-width="6"/></svg></div><p><b>Navigation Item</b> - Represents a<br>state of the navigation bar, including<br>a title.</p></article>
        <article class="item"><div class="thumb pale tb"><div class="tb-bar">Edit</div></div><p><b>Toolbar</b> - Provides a mechanism for<br>displaying a toolbar at the bottom of<br>the screen.</p></article>
        <article class="item"><div class="thumb pale barbtn"><span>Item</span></div><p><b>Bar Button Item</b> - Represents an<br>item on a UIToolbar or</p></article>
      </div>
      <div class="bottom white">
        <svg class="gridic" width="26" height="26" viewBox="0 0 26 26"><path d="M1 1h10v10H1zM15 1h10v10H15zM1 15h10v10H1zM15 15h10v10H15z" fill="none" stroke="#7c7c7c" stroke-width="2"/></svg>
        <div class="field lib-field"><svg width="26" height="26"><use href="#filter"/></svg><span class="ph">Filter</span></div>
      </div>
    </aside>
  </div>
</div>
</body>
</html>
```

FILE: styles.css
```css
* { box-sizing: border-box; }
html, body { margin: 0; padding: 0; }
body {
  width: 3584px; height: 2270px; overflow: hidden; background: #fff;
  font-family: Inter, "Liberation Sans", sans-serif; font-size: 22px; color: #3a3a3a;
  padding: 62px 112px 0;
}
.defs { position: absolute; }
svg { display: block; flex: none; }
.ticon, .ticon * { fill: none; stroke: #6e6e6e; stroke-width: 2; }
.ticon.dark, .ticon.dark * { stroke: #555; }

.window {
  width: 3360px; height: 2048px; border-radius: 12px; overflow: hidden;
  display: flex; flex-direction: column; background: #fff;
  box-shadow: 0 44px 90px rgba(0,0,0,.5), 0 0 0 1px rgba(0,0,0,.16);
}

/* title bar */
.titlebar {
  height: 78px; flex: none; display: flex; align-items: flex-start; padding-top: 17px;
  background: linear-gradient(#e9e7e9, #d0ced0); border-bottom: 2px solid #b3b1b3;
}
.lights { display: flex; gap: 16px; width: 156px; padding: 11px 0 0 25px; flex: none; }
.light { width: 24px; height: 24px; border-radius: 50%; }
.red { background: #f0625a; } .yellow { background: #f5bd4f; } .green { background: #61c354; }
.tbtn {
  width: 74px; height: 45px; margin-right: 16px; padding: 0; flex: none;
  border: 0; border-radius: 7px; background: linear-gradient(#fff, #f1f1f1);
  box-shadow: 0 1px 1px rgba(0,0,0,.28);
  display: flex; align-items: center; justify-content: center;
}
.stopsq { width: 25px; height: 24px; background: #b9b9b9; }
.scheme { width: 356px; justify-content: flex-start; color: #111; font-size: 21.500px; padding-left: 12px; margin-right: 0; }
.scheme-app { margin-right: 11px; }
.scheme-sep { margin: 0 6px 0 9px; }
.scheme-phone { margin: 0 16px 0 10px; }
.scheme-phone2 { margin-left: 8px; }
.status {
  width: 1023px; height: 45px; margin-left: 477px; border-radius: 7px; flex: none;
  background: linear-gradient(#fcfcfc, #f0f0f0); box-shadow: 0 1px 1px rgba(0,0,0,.28);
  display: flex; align-items: center; padding-left: 15px; color: #222; font-size: 22.200px;
}
.status b { font-weight: 700; color: #111; }
.status-sep { width: 1px; height: 24px; background: #777; margin: 0 16px; }
.status-time { letter-spacing: .7px; }
.segs { display: flex; gap: 16px; margin-left: 756px; }
.seg {
  display: flex; height: 45px; border-radius: 7px; background: linear-gradient(#fff, #f1f1f1);
  box-shadow: 0 1px 1px rgba(0,0,0,.28);
}
.segcell { width: 64px; display: flex; align-items: center; justify-content: center; border-right: 1px solid #dcdcdc; }
.segcell.last { border-right: 0; width: 62px; }

/* workspace */
.workspace {
  flex: 1; min-height: 0; display: grid;
  grid-template-columns: 544px 554px 1744px 518px;
  grid-template-rows: 58px 1912px;
}
.navtools {
  background: #f5f5f5; border-bottom: 3px solid #b7b7b7; border-right: 2px solid #b7b7b7;
  display: grid; grid-template-columns: repeat(9, 60px); justify-items: center; align-items: center; padding-bottom: 2px;
}
.crumbs {
  grid-column: 2 / span 2; background: #fff; border-bottom: 3px solid #b7b7b7;
  display: flex; align-items: center; padding-left: 16px; color: #111; font-size: 22px; padding-bottom: 1px;
}
.rel { margin-right: 28px; }
.fwd { margin-left: 33px; }
.c-first { margin-left: 32px; }
.crumb { display: flex; align-items: center; gap: 11px; white-space: nowrap; }
.csep { margin: 0 8px 0 7px; }
.csep.s6 { margin-right: 6px; }
.csep.s7 { margin-right: 7px; }
.csep.s8 { margin-right: 8px; }
.csep.s12 { margin-right: 12px; }
.csep.s14 { margin-right: 14px; }
.insptools {
  background: #f1f1f1; border-bottom: 3px solid #b7b7b7; border-left: 1px solid #b7b7b7;
  display: grid; grid-template-columns: repeat(6, 60px); justify-items: center; align-items: center; padding: 0 0 2px 77px;
}

/* lists */
.navigator, .outline { display: flex; flex-direction: column; min-height: 0; }
.navigator { background: #f5f5f5; border-right: 2px solid #b7b7b7; }
.outline { background: #fff; border-right: 2px solid #a8a8a8; }
.list { flex: 1; min-height: 0; }
.row { height: 40px; display: flex; align-items: center; white-space: nowrap; }
.picked { background: #cacaca; color: #0c0c0c; }
.d0 { padding-left: 8px; } .d1 { padding-left: 36px; } .d2 { padding-left: 64px; }
.tri { width: 24px; flex: none; padding: 0; }
svg.tri { width: 24px; }
.ic { width: 40px; flex: none; display: flex; justify-content: center; margin-right: 2px; }
.outline .list { padding-top: 8px; }
.orow { height: 36px; display: flex; align-items: center; white-space: nowrap; }
.orow .tri { margin-right: 2px; }
.o0 { padding-left: 12px; } .o1 { padding-left: 44px; } .o2 { padding-left: 76px; } .o3 { padding-left: 108px; }
.scene-row { margin-bottom: 8px; color: #222; }
.scene-row b { font-weight: 700; }
.tight { margin-left: -4px; letter-spacing: .15px; }
.osep { height: 2px; background: #d4d4d4; margin: 8px 20px 6px 20px; }
.picked-light { background: #dbdbdb; }

.bottom { height: 58px; flex: none; display: flex; align-items: center; position: relative; padding-top: 2px; }
.bottom.white { background: #fff; }
.plus { margin: 0 14px 0 17px; }
.field {
  height: 42px; border: 2px solid #bdbdbd; border-radius: 7px; display: flex; align-items: center; padding-left: 9px; gap: 8px;
}
.nav-field { width: 475px; }
.out-field { width: 531px; margin-left: 10px; }
.lib-field { width: 450px; margin-left: 16px; }
.ph { color: #c8c8c8; font-weight: 500; }
.clock { margin-left: auto; }
.nav-field svg:last-child { margin-right: 8px; }
.gridic { margin-left: 15px; }

/* canvas */
.canvas { display: flex; flex-direction: column; min-height: 0; background: #fff; }
.stage { flex: 1; position: relative; min-height: 0; background: #fff; }
.vclabel {
  position: absolute; top: 307px; width: 597px; height: 50px; border-radius: 5px; background: #fff;
  display: flex; align-items: center; justify-content: center;
  font-size: 20px; font-weight: 600; color: #666; padding-top: 2px;
}
.vclabel.a { left: 183px; border: 1px solid #c2c2c2; border-bottom-width: 2px; }
.vclabel.b { left: 990px; width: 598px; border: 2px solid #777; gap: 37px; padding-top: 0; }
.vc-scene { position: absolute; top: 374px; width: 597px; height: 1062px; }
.vc-scene.blue { left: 183px; background: #b9cbe3; border: 2px solid #3f67e2; border-top-width: 3px; }
.vc-scene.pink { left: 990px; width: 598px; background: #f1a2e0; border: 2px solid #7d76bc; border-top-width: 3px; border-top-color: #a98ae0; }
.band { position: absolute; left: 0; right: 0; top: 31px; height: 3px; background: #6a90ea; }
.safe { position: absolute; left: 24px; right: 25px; top: 31px; bottom: 0; border: 2px solid #9ab5e8; border-bottom: 0; }
.pink .safe { border-color: #c796e6; }
.uiview { position: absolute; left: 0; right: 0; top: 518px; text-align: center; color: #fff; font-weight: 700; font-size: 20px; line-height: 24px; }
.links { position: absolute; left: 0; top: 855px; }
.canvasbar {
  height: 58px; flex: none; background: #efefef; display: flex; align-items: center; padding-left: 17px;
}
.outline-toggle { margin-right: 37px; margin-top: 2px; }
.viewas { font-size: 25.500px; color: #222; white-space: nowrap; width: 695px; margin-top: -4px; }
.viewas small { font-size: 16px; color: #aaa; margin: 0 2px; }
.zoomctl { display: flex; align-items: center; gap: 0; width: 300px; }
.zoomctl svg:first-child { margin-right: 39px; }
.zoomctl span { font-size: 24px; color: #555; width: 92px; }
.cbicons { display: flex; gap: 22px; align-items: center; margin-left: 412px; }

/* inspector */
.inspector { background: #f1f1f1; border-left: 1px solid #b7b7b7; display: flex; flex-direction: column; min-height: 0; }
.attrs { height: 781px; flex: none; border-bottom: 2px solid #bdbdbd; position: relative; }
.insp-title { height: 36px; line-height: 36px; padding-left: 10px; margin-bottom: 6px; font-weight: 700; font-size: 20px; color: #333; }
.irow { display: flex; align-items: center; position: relative; }
.r44 { height: 44px; } .r45 { height: 45px; } .r36 { height: 36px; }
.gap13 { margin-top: 13px; }
.ilabel { width: 158px; flex: none; text-align: right; margin-right: 11px; font-size: 20px; color: #444; }
.popup {
  width: 333px; height: 33px; background: #fff; border-radius: 6px; display: flex; align-items: center; position: relative;
  box-shadow: 0 0 0 1px #d6d6d6, 0 1px 1px rgba(0,0,0,.18); padding-left: 15px; overflow: hidden; color: #222;
}
.popup-arrow {
  position: absolute; right: 0; top: 0; bottom: 0; width: 28px; color: #fff;
  background: linear-gradient(#6ba9f8, #2d7ef0); display: flex; align-items: center; justify-content: center;
}
.popup-cut { position: absolute; left: 298px; top: 0; bottom: 0; width: 2px; background: #dcdcdc; }
.popup-cut.near { left: 82px; }
.swatch { height: 16px; border: 2px solid #000; display: block; }
.pinkswatch { width: 271px; background: #f1a2e0; }
.tintswatch { width: 55px; background: #2a75e8; }
.tint-name { margin-left: 22px; }
.numfield {
  height: 36px; background: #fff; border: 1px solid #c8c8c8; text-align: right; line-height: 36px; padding-right: 8px; color: #222;
}
.numfield.full { width: 309px; }
.numfield.half { width: 133px; }
.numfield.second { margin-left: 19px; }
.stepper {
  width: 18px; height: 34px; margin-left: 6px; border-radius: 8px; background: #fff; box-shadow: 0 0 0 1px #d0d0d0;
  display: flex; align-items: center; justify-content: center; color: #555; flex: none;
}
.idiv { border: 0; height: 2px; background: #d2d2d2; margin: 0 16px; }
.d7 { margin-top: 7px; margin-bottom: 4px; }
.d4 { margin-top: 4px; margin-bottom: 5px; }
.d7b { margin-top: 7px; margin-bottom: 3px; }
.d4c { margin-top: 4px; margin-bottom: 6px; }
.iplus { position: absolute; left: 9px; top: 50%; transform: translateY(-50%); width: 20px; text-align: center; color: #999; font-size: 24px; font-weight: 300; }
.cb { width: 24px; height: 24px; border-radius: 5px; background: #fff; box-shadow: 0 0 0 1px #bdbdbd; flex: none; margin-left: -1px; }
.cb.on { background: #4f95f3; box-shadow: none; }
.cbtext { margin-left: 10px; color: #2a2a2a; white-space: nowrap; }
.subrow { display: flex; padding-left: 169px; height: 14px; line-height: 14px; font-size: 20px; color: #444; }
.subrow span { width: 133px; text-align: center; margin-right: 44px; }
.subrow:last-child { height: 16px; line-height: 16px; }
.lib-gap { flex: 1; }
.libtabs {
  height: 59px; flex: none; background: #fff; border-top: 2px solid #bdbdbd; border-bottom: 2px solid #bdbdbd;
  display: grid; grid-template-columns: repeat(4, 60px); justify-items: center; align-items: center; padding-left: 137px;
}
.library { background: #fff; height: 815px; overflow: hidden; flex: none; border-bottom: 2px solid #bdbdbd; }
.item {
  height: 126px; display: flex; padding: 15px 8px 0 18px; gap: 14px; position: relative;
}
.item::after { content: ""; position: absolute; left: 8px; right: 8px; bottom: 0; height: 2px; background: #d2d2d2; }
.item.chosen { background: #ececec; }
.item.chosen::after { left: 0; right: 0; background: #bdbdbd; }
.item:nth-child(2)::after { left: 0; right: 0; background: #bdbdbd; }
.item p { margin: 6px 0 0; white-space: nowrap; font-size: 20px; line-height: 26px; color: #444; }
.item p b { font-weight: 700; font-size: 22px; color: #222; line-height: 22px; }
.thumb { width: 88px; height: 88px; flex: none; position: relative; overflow: hidden; }
.thumb.gray { background: #d8d8d8; border: 2px solid #9a9a9a; display: flex; align-items: center; justify-content: center; }
.thumb.pale { background: #f1f1f1; border: 1px solid #b8b8b8; }
.thumb.center { display: flex; align-items: center; justify-content: center; }
.radio { position: absolute; left: 10px; top: 10px; }
.thumb-view { width: 60px; height: 58px; background: #fff; border: 2px solid #c2c2c2; display: flex; align-items: center; justify-content: center; }
.thumb-inner { width: 40px; height: 34px; background: #d8d8d8; border: 2px solid #c2c2c2; }
.nb { height: 37px; background: #fff; border-bottom: 1px solid #d0d0d0; display: flex; align-items: center; justify-content: space-between; padding: 0 9px 0 5px; color: #5a8de0; font-size: 19px; }
.tb { display: flex; align-items: flex-end; }
.tb-bar { width: 100%; height: 37px; background: #fff; border-top: 1px solid #d0d0d0; color: #4a80de; font-size: 19px; line-height: 36px; padding-left: 9px; }
.barbtn span { position: absolute; left: 0; right: 0; top: 30px; text-align: center; color: #2a6fe0; font-weight: 700; font-size: 26px; }
```
